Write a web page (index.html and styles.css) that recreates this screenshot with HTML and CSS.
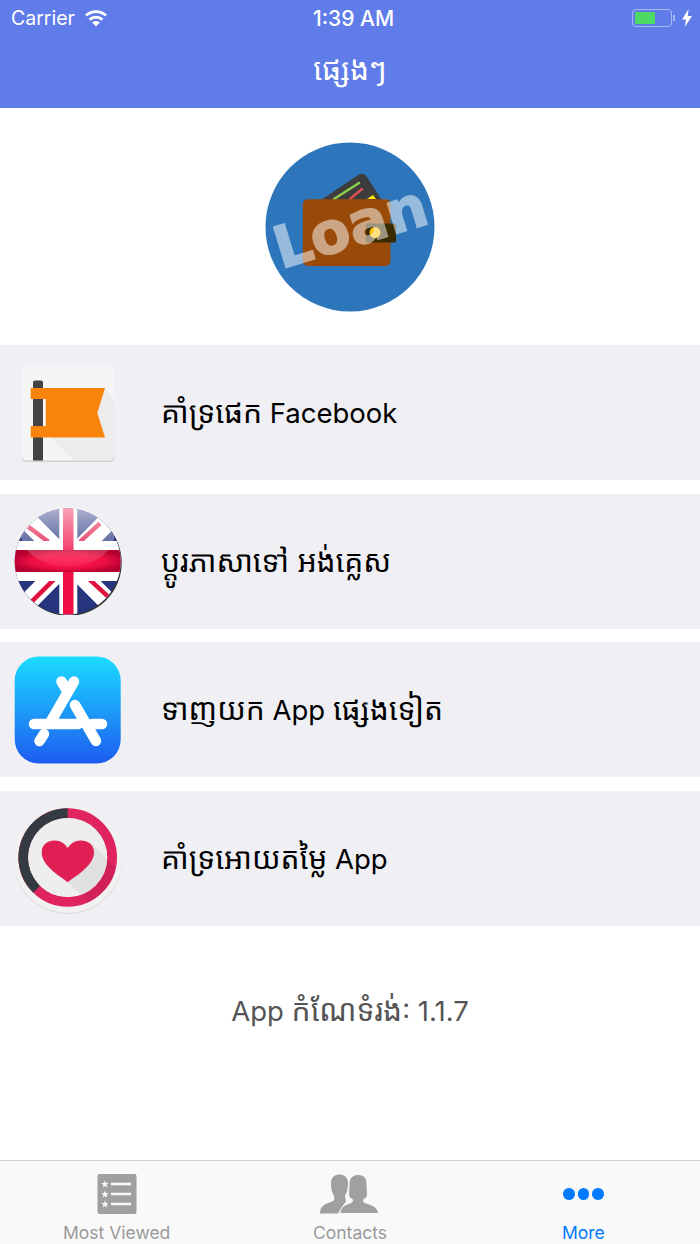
FILE: index.html
```html
<!DOCTYPE html>
<html lang="km">
<head>
<meta charset="utf-8">
<title>ផ្សេងៗ</title>
<link rel="stylesheet" href="styles.css">
</head>
<body>
<div class="app">
  <header class="nav">
    <div class="status">
      <div class="status-left">
        <span>Carrier</span>
        <svg class="wifi" viewBox="0 0 24 18"><path d="M12 17.500 8.200 13.400a5.600 5.600 0 0 1 7.600 0Z" fill="#fff"/><path d="M5.600 10.600a9.400 9.400 0 0 1 12.800 0" fill="none" stroke="#fff" stroke-width="2.800"/><path d="M2 6.600a14.600 14.600 0 0 1 20 0" fill="none" stroke="#fff" stroke-width="2.800"/></svg>
      </div>
      <div class="status-time">1:39 AM</div>
      <div class="status-right">
        <div class="battery"><div class="battery-fill"></div></div>
        <div class="battery-cap"></div>
        <svg class="bolt" viewBox="0 0 10 18"><path d="M6.500 0 0 10.500h4L2.800 18 10 7H5.800Z" fill="#fff"/></svg>
      </div>
    </div>
    <h1 class="nav-title">ផ្សេងៗ</h1>
  </header>

  <main class="content">
    <div class="logo-wrap">
      <svg class="logo" viewBox="0 0 170 170">
        <circle cx="85" cy="85" r="84.500" fill="#2d76bb"/>
        <path d="M56 58 94 32.500q4-2 7 1L118 60v30H56Z" fill="#3d3d3d"/>
        <path d="M69 57 94 41" stroke="#8fd14f" stroke-width="2.500" stroke-linecap="round"/>
        <path d="M85 57 97 47" stroke="#d9534f" stroke-width="2.500" stroke-linecap="round"/>
        <path d="M102 57 108 53 111 57Z" fill="#ffee00"/>
        <rect x="37.800" y="57.300" width="87.700" height="66.700" rx="5" fill="#9a4a08"/>
        <rect x="101" y="81.500" width="30" height="19" rx="1.500" fill="#3a2a00"/>
        <circle cx="110" cy="90.500" r="5.500" fill="#ffc000"/>
        <text class="logo-text" transform="translate(16 127) rotate(-17)">Loan</text>
      </svg>
    </div>

    <ul class="menu">
      <li class="row">
        <svg class="icon" viewBox="0 0 108 108">
          <rect x="7" y="9" width="94" height="94" rx="6" fill="#cfcfd2"/>
          <rect x="7" y="7.500" width="94" height="94" rx="6" fill="#f5f5f5"/>
          <path d="M29 70 60 101.500H95a6 6 0 0 0 6-6V44L91 29 50 78Z" fill="#ececec"/>
          <path d="M19 101.500V23.500a2 2 0 0 1 2-2h6a2 2 0 0 1 2 2v78Z" fill="#434343"/>
          <rect x="29" y="40" width="3" height="27" fill="#fafafa"/>
          <path d="M16.700 29H91L83.300 54 91 78.500H16.700V67H31.700V40H16.700Z" fill="#f8840c"/>
        </svg>
        <span class="row-label"><span class="km">គាំទ្រផេក</span> Facebook</span>
      </li>
      <li class="row">
        <svg class="icon" viewBox="0 0 108 108">
          <defs>
            <clipPath id="disc"><circle cx="53.700" cy="54.500" r="53"/></clipPath>
            <linearGradient id="gloss" x1="0" y1="0" x2="0" y2="1"><stop offset="0" stop-color="#fff" stop-opacity=".7"/><stop offset="1" stop-color="#fff" stop-opacity=".04"/></linearGradient>
            <radialGradient id="redglow" cx=".5" cy=".5" r=".55"><stop offset="0" stop-color="#ff1550"/><stop offset=".6" stop-color="#f00f45"/><stop offset="1" stop-color="#b4002e"/></radialGradient>
          </defs>
          <circle cx="54.700" cy="55.800" r="53" fill="#333"/>
          <g clip-path="url(#disc)">
            <rect width="108" height="108" fill="#27357f"/>
            <path d="M4 4 104 105M104 4 4 105" stroke="#fff" stroke-width="19"/>
            <path d="M14.300 19.700 34.300 34.700M86 16.300 66 34.700M17.700 94.700 41 71.300M74.300 71.300 96 91.300" stroke="#e0103f" stroke-width="4.500"/>
            <rect x="45.300" y="0" width="18" height="108" fill="#fff"/>
            <rect y="34" width="108" height="40" fill="#fff"/>
            <rect x="49" y="0" width="10.500" height="108" fill="#f00f45"/>
            <rect y="43" width="108" height="22" fill="url(#redglow)"/>
            <ellipse cx="53.700" cy="26" rx="47" ry="34" fill="url(#gloss)"/>
          </g>
        </svg>
        <span class="row-label"><span class="km">ប្តូរភាសាទៅ អង់គ្លេស</span></span>
      </li>
      <li class="row">
        <svg class="icon" viewBox="0 0 108 108">
          <defs><linearGradient id="store" x1="0" y1="0" x2="0" y2="1"><stop offset="0" stop-color="#1bdcff"/><stop offset="1" stop-color="#1d5cf0"/></linearGradient></defs>
          <rect x=".7" y=".5" width="106" height="107" rx="24" fill="url(#store)"/>
          <g fill="none" stroke="#fff" stroke-width="10.500" stroke-linecap="round">
            <path d="M60 25.500 36 67"/>
            <path d="M47.500 25.500 52 33"/>
            <path d="M61 49 82 85"/>
            <path d="M20 68H64"/>
            <path d="M78 68H88"/>
            <path d="M25.500 85 30 78"/>
          </g>
        </svg>
        <span class="row-label"><span class="km">ទាញយក</span> App <span class="km">ផ្សេងទៀត</span></span>
      </li>
      <li class="row">
        <svg class="icon icon-over" viewBox="0 0 108 108">
          <defs><clipPath id="inner"><circle cx="53.700" cy="53.500" r="49.200"/></clipPath></defs>
          <circle cx="53.700" cy="55.500" r="54.500" fill="#d9d9db"/>
          <circle cx="53.700" cy="54.500" r="54.500" fill="#f1f1f1"/>
          <circle cx="53.700" cy="53.500" r="44.400" fill="none" stroke="#e0245e" stroke-width="9.800"/>
          <path d="M53.700 9.100A44.400 44.400 0 0 0 22.700 85.300" fill="none" stroke="#333a42" stroke-width="9.800"/>
          <circle cx="53.700" cy="53.500" r="39.500" fill="#eeeeee"/>
          <path d="M76 38 136 98 114 138 54 78Z" fill="#000" fill-opacity=".06" clip-path="url(#inner)"/>
          <path d="M53.700 78.200C44 71 27.700 61 27.700 48.500 27.700 40.500 33.500 36.500 40.500 36.500c6 0 10.500 3 13.200 7.500C56.400 39.500 60.900 36.500 66.900 36.500c7 0 13.100 4 13.100 12C80 61 63.400 71 53.700 78.200Z" fill="#e02055"/>
        </svg>
        <span class="row-label"><span class="km">គាំទ្រអោយតម្លៃ</span> App</span>
      </li>
    </ul>

    <p class="version"><span>App <span class="km">កំណែទំរង់</span>: 1.1.7</span></p>
  </main>

  <nav class="tabs">
    <div class="tab">
      <svg class="tab-icon" viewBox="0 0 40 40">
        <rect x="0.500" width="39" height="40" rx="2" fill="#a0a0a0"/>
        <path d="M14 10H34M14 20H34M14 30H34" stroke="#f9f9f9" stroke-width="2.600"/>
        <g fill="#f9f9f9">
          <path d="M8 6.500 9 9h2.700L9.600 10.700 10.300 13.500 8 12 5.700 13.500 6.400 10.700 4.300 9H7Z"/>
          <path d="M8 16.500 9 19h2.700L9.600 20.700 10.300 23.500 8 22 5.700 23.500 6.400 20.700 4.300 19H7Z"/>
          <path d="M8 26.500 9 29h2.700L9.600 30.700 10.300 33.500 8 32 5.700 33.500 6.400 30.700 4.300 29H7Z"/>
        </g>
      </svg>
      <span class="tab-label">Most Viewed</span>
    </div>
    <div class="tab">
      <svg class="tab-icon tab-icon-wide" viewBox="0 0 60 40">
        <path d="M0 39.500C0 32 5 30 11 28 15 26.500 15 24 13.500 21 11 16 11 12 11 9 11 3 15 .5 20 .5 25 .5 28 4 28 9.500 28 14 27 18 25 22L26 28 24 30 18 39.500Z" fill="#a0a0a0"/>
        <path d="M20 39.500C20 33 25 31 30 29 33 28 33 26.500 32 25 27 24 29 18 29 10 29 4 33 .5 38 .5 44 .5 47 4 47 10 47 18 49 24 44 25 43 27 43 28 46 29 52 31 58 33 58.500 39.500Z" fill="#a0a0a0" stroke="#f9f9f9" stroke-width="1"/>
      </svg>
      <span class="tab-label">Contacts</span>
    </div>
    <div class="tab tab-active">
      <div class="dots"><i></i><i></i><i></i></div>
      <span class="tab-label">More</span>
    </div>
  </nav>
</div>
</body>
</html>
```
FILE: styles.css
```css
* { box-sizing: border-box; }
html, body { margin: 0; height: 100%; overflow: hidden; background: #fff; }
body { font-family: Inter, "Noto Sans", "Noto Sans Khmer", "Khmer OS", sans-serif; }
.app { height: 1244px; display: flex; flex-direction: column; }

.nav { height: 108px; background: #5f7ce9; color: #fff; flex: none; }
.status { height: 36px; display: grid; grid-template-columns: 1fr auto 1fr; align-items: center; padding: 0 8px 0 11px; font-size: 19.500px; }
.status-left { display: flex; align-items: center; gap: 9px; }
.wifi { width: 24px; height: 18px; }
.status-time { font-weight: 500; font-size: 21px; margin-left: 4px; }
.status-right { display: flex; align-items: center; justify-content: flex-end; }
.battery { width: 40px; height: 18px; border: 1.500px solid #a9b8f3; border-radius: 4px; padding: 2px; }
.battery-fill { width: 20px; height: 100%; background: #4cd964; }
.battery-cap { width: 2px; height: 6px; background: #a9b8f3; margin-left: 1px; }
.bolt { width: 10px; height: 18px; margin-left: 7px; }
.nav-title { margin: 0; height: 72px; display: flex; align-items: center; justify-content: center; font-size: 30px; font-weight: 400; padding-bottom: 7px; }

.content { flex: 1; display: flex; flex-direction: column; }
.logo-wrap { height: 237px; display: flex; align-items: center; justify-content: center; flex: none; }
.logo { width: 170px; height: 170px; overflow: visible; }
.logo-text { font-family: "DejaVu Sans", sans-serif; font-weight: 700; font-size: 58px; fill: #fff; stroke: #fff; stroke-width: 1.500px; opacity: .5; }

.menu { list-style: none; margin: 0; padding: 0; display: grid; grid-auto-rows: 135px; row-gap: 13.500px; flex: none; }
.row { background: #efeff4; display: flex; align-items: center; padding-left: 14px; gap: 39px; }
.icon { width: 108px; height: 108px; flex: none; }
.icon-over { overflow: visible; }
.row-label { font-size: 27.500px; color: #000; margin-top: -2px; }
.km { font-size: 30px; }

.version { margin: 0; flex: 1; display: flex; justify-content: center; padding-top: 63px; font-size: 27.500px; color: #555; }

.tabs { height: 84px; flex: none; display: grid; grid-template-columns: repeat(3, 1fr); background: #f9f9f9; border-top: 1px solid #cfcfcf; }
.tab { display: flex; flex-direction: column; align-items: center; padding-top: 13px; color: #999; }
.tab-icon { width: 40px; height: 40px; }
.tab-icon-wide { width: 60px; }
.tab-label { font-size: 17.500px; line-height: 22px; margin-top: 8px; }
.tab-active { color: #007aff; }
.dots { height: 40px; display: flex; align-items: center; gap: 3px; }
.dots i { width: 11.500px; height: 11.500px; border-radius: 50%; background: #007aff; }
```
